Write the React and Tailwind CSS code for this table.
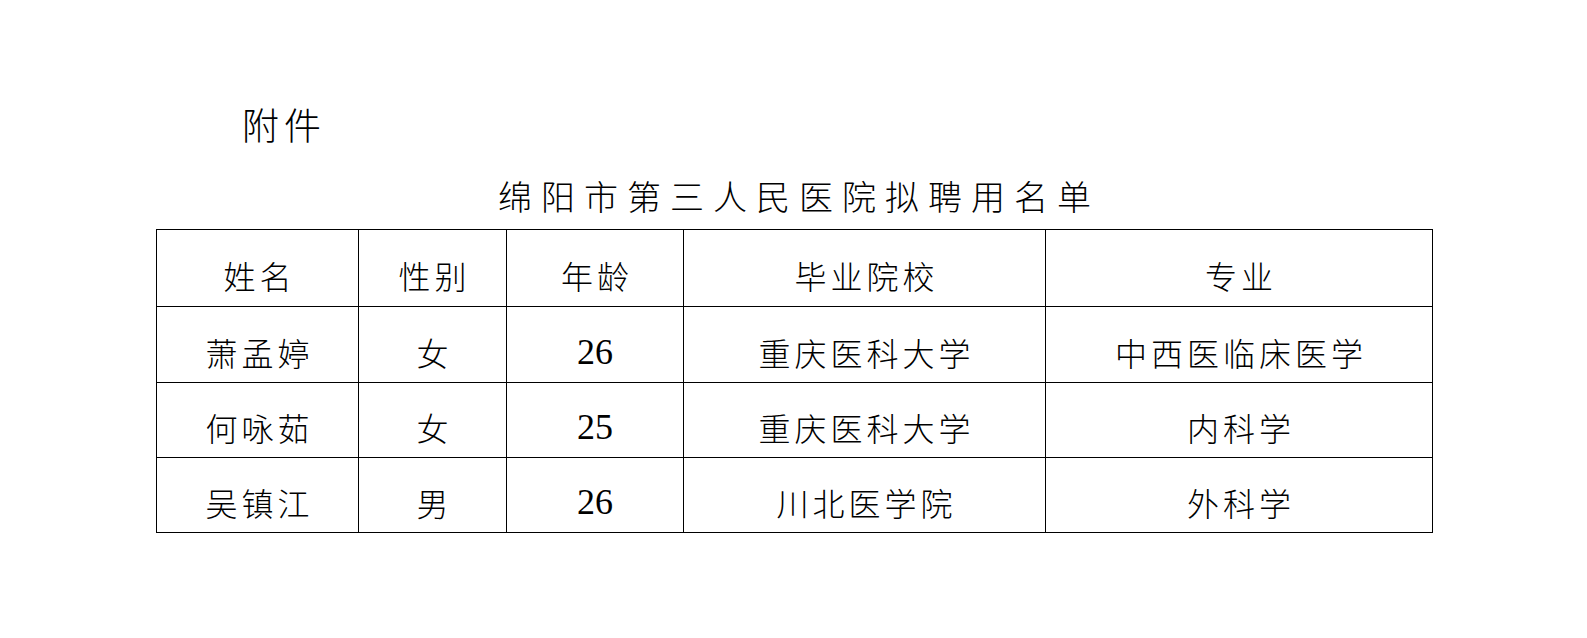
export default function App() {
  const cols = ["w-[201px]", "w-[148px] border-l", "w-[177px] border-l", "w-[362px] border-l", "w-[387px] border-l"];
  const heights = ["h-[76px]", "h-[76px]", "h-[75px]", "h-[75px]"];
  const header = ["姓名", "性别", "年龄", "毕业院校", "专业"];
  const rows = [
    ["萧孟婷", "女", "26", "重庆医科大学", "中西医临床医学"],
    ["何咏茹", "女", "25", "重庆医科大学", "内科学"],
    ["吴镇江", "男", "26", "川北医学院", "外科学"],
  ];
  const cjk = "font-['Noto_Sans_CJK_SC',sans-serif]";
  return (
    <div className={`w-[1587px] h-[638px] bg-white text-black ${cjk} font-light`}>
      <div className="pt-[104px] pl-[242px] text-[37px] leading-[40px] tracking-[5px]">附件</div>
      <div className="ml-[156px] w-[1277px]">
        <div className="mt-[32px] h-[40px] leading-[40px] text-center text-[34px] tracking-[9px] pl-[9px]">
          绵阳市第三人民医院拟聘用名单
        </div>
        <div className="mt-[13px] border border-black">
          {[header, ...rows].map((r, ri) => (
            <div key={ri} className={`flex ${heights[ri]} ${ri > 0 ? "border-t border-black" : ""}`}>
              {r.map((c, ci) => {
                const isNum = ci === 2 && ri > 0;
                return (
                  <div
                    key={ci}
                    className={`${cols[ci]} border-black flex items-center justify-center pt-[14px] ${
                      isNum
                        ? "font-['Liberation_Serif',serif] text-[36px] font-normal"
                        : "text-[32px] tracking-[4px] pl-[4px]"
                    }`}
                  >
                    {c}
                  </div>
                );
              })}
            </div>
          ))}
        </div>
      </div>
    </div>
  );
}
